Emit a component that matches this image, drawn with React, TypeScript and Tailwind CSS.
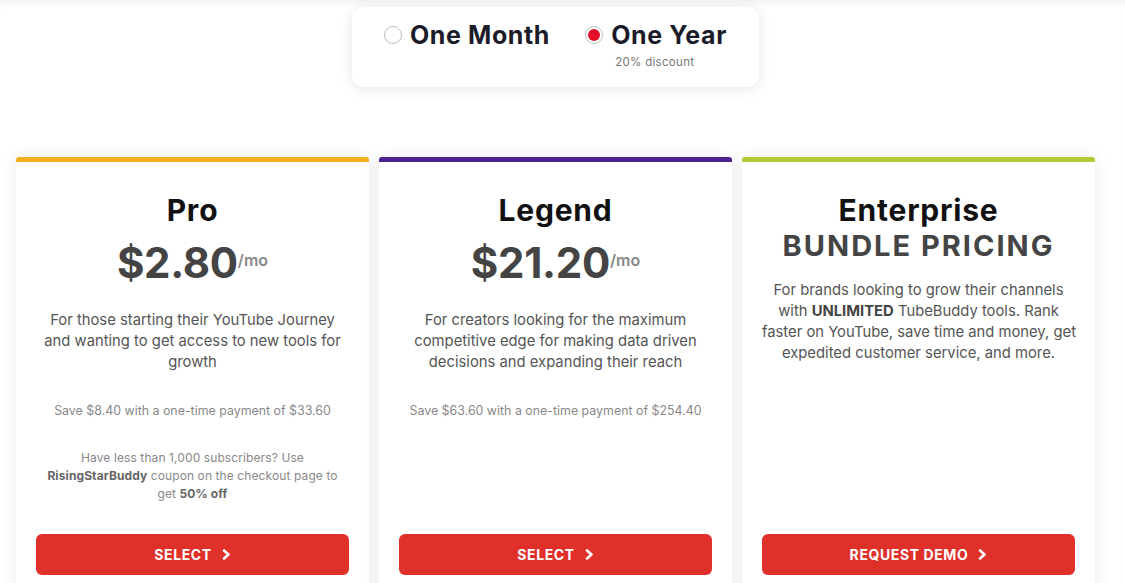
import type { ReactNode } from 'react';

const FONT = "font-['Inter','Noto_Sans',sans-serif]";

type Plan = {
  name: string;
  bar: string;
  price?: string;
  bundle?: boolean;
  description: ReactNode;
  save?: string;
  coupon?: boolean;
  cta: string;
};

const PLANS: Plan[] = [
  {
    name: 'Pro',
    bar: 'border-t-[#f2b01e]',
    price: '$2.80',
    description: <>For those starting their YouTube Journey<br />and wanting to get access to new tools for<br />growth</>,
    save: 'Save $8.40 with a one-time payment of $33.60',
    coupon: true,
    cta: 'SELECT',
  },
  {
    name: 'Legend',
    bar: 'border-t-[#4a2190]',
    price: '$21.20',
    description: <>For creators looking for the maximum<br />competitive edge for making data driven<br />decisions and expanding their reach</>,
    save: 'Save $63.60 with a one-time payment of $254.40',
    cta: 'SELECT',
  },
  {
    name: 'Enterprise',
    bar: 'border-t-[#b4c935]',
    bundle: true,
    description: (
      <>
        For brands looking to grow their channels<br />
        with <b className="font-bold text-[#444]">UNLIMITED</b> TubeBuddy tools. Rank<br />
        faster on YouTube, save time and money, get<br />
        expedited customer service, and more.
      </>
    ),
    cta: 'REQUEST DEMO',
  },
];

function Chevron() {
  return (
    <svg width="9" height="11" viewBox="0 0 9 11" fill="none" className="ml-[10px]">
      <path d="M2 1.5 L6.5 5.5 L2 9.5" stroke="white" strokeWidth="2.6" strokeLinecap="round" strokeLinejoin="round" />
    </svg>
  );
}

function Radio({ checked }: { checked?: boolean }) {
  return (
    <span className="flex h-[18px] w-[18px] shrink-0 items-center justify-center rounded-full border border-[#bdbdbd] bg-white">
      {checked && <span className="h-[12px] w-[12px] rounded-full bg-[#e2102b]" />}
    </span>
  );
}

function PlanCard({ plan }: { plan: Plan }) {
  return (
    <div className={`flex flex-col rounded-t-[3px] border-t-[5px] ${plan.bar} bg-white px-5 pb-5 pt-[30px] text-center shadow-[0_0_18px_rgba(0,0,0,0.08)]`}>
      <h2 className="text-[30px] font-bold leading-[36px] tracking-[0.8px] text-[#111]">{plan.name}</h2>
      {plan.price && (
        <div className="mt-[9px] flex h-[52px] items-baseline justify-center leading-[52px]">
          <span className="text-[42px] font-bold tracking-[-0.3px] text-[#444]">{plan.price}</span>
          <span className="-translate-y-[12px] text-[16px] font-semibold leading-[16px] text-[#888]">/mo</span>
        </div>
      )}
      {plan.bundle && (
        <div className="text-[29px] font-bold leading-[36px] tracking-[2px] text-[#444]">BUNDLE PRICING</div>
      )}
      <p className={`${plan.bundle ? 'mt-[16px]' : 'mt-[21px]'} whitespace-nowrap text-[14.8px] leading-[21px] text-[#555]`}>{plan.description}</p>
      {plan.save && <p className="mt-[29px] whitespace-nowrap text-[12.4px] leading-[18px] text-[#888]">{plan.save}</p>}
      {plan.coupon && (
        <p className="mt-[29px] whitespace-nowrap text-[12px] leading-[18px] tracking-[0.1px] text-[#888]">
          Have less than 1,000 subscribers? Use<br />
          <b className="font-bold text-[#666]">RisingStarBuddy</b> coupon on the checkout page to<br />
          get <b className="font-bold text-[#666]">50% off</b>
        </p>
      )}
      <div className="min-h-[31px] flex-1" />
      <button className="flex h-[41px] items-center justify-center rounded-[6px] bg-[#e0302a] text-[14px] font-bold tracking-[0.6px] text-white">
        {plan.cta}
        <Chevron />
      </button>
    </div>
  );
}

export default function App() {
  return (
    <div className={`${FONT} min-h-[583px] overflow-hidden bg-white shadow-[inset_0_7px_7px_-5px_rgba(0,0,0,0.07)]`}>
      <div className="pl-4 pr-[30px]">
        <div className="flex justify-center pt-[7px]">
          <div className="flex h-[80px] w-[407px] items-start justify-between whitespace-nowrap rounded-[12px] bg-white px-8 pt-[14px] shadow-[0_2px_14px_rgba(0,0,0,0.1)]">
            <label className="flex items-center gap-2">
              <Radio />
              <span className="text-[25px] font-bold leading-[28px] tracking-[0.6px] text-[#1b1b2a]">One Month</span>
            </label>
            <div className="flex flex-col">
              <label className="flex items-center gap-2">
                <Radio checked />
                <span className="text-[25px] font-bold leading-[28px] tracking-[0.6px] text-[#1b1b2a]">One Year</span>
              </label>
              <span className="ml-[30px] mt-[6px] text-[11.5px] leading-[14px] tracking-[0.3px] text-[#777]">20% discount</span>
            </div>
          </div>
        </div>
        <div className="mt-[70px] grid grid-cols-3 gap-[10px]">
          {PLANS.map((plan) => <PlanCard key={plan.name} plan={plan} />)}
        </div>
      </div>
    </div>
  );
}
